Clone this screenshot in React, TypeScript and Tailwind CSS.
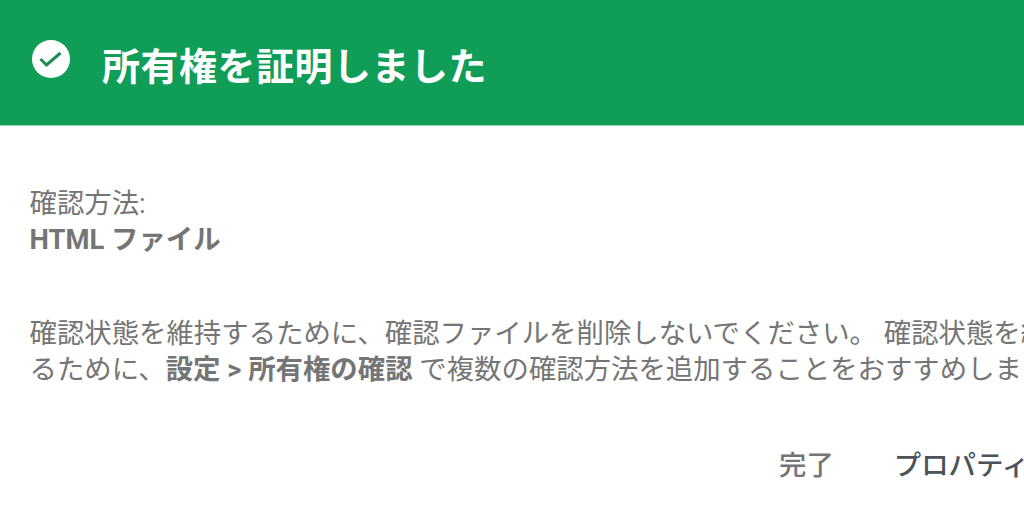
export default function App() {
  return (
    <div className="w-[1024px] h-[512px] overflow-hidden bg-white font-['Roboto','Noto_Sans_CJK_JP',sans-serif]">
      <div className="w-[1200px]">
        <header className="h-[126px] bg-[#0f9d58] flex items-center pl-[31px] border-b border-[#8fd6b4]">
          <svg viewBox="0 0 40 40" className="w-[40px] h-[40px] mb-[8px]">
            <circle cx="20" cy="20" r="19" fill="#fff" />
            <path d="M9.5 20 L15.5 26 L29.5 14" fill="none" stroke="#1d8a56" strokeWidth="3" />
          </svg>
          <h1 className="ml-[31px] mt-[8px] text-[38px] leading-[48px] font-bold text-white tracking-[0.5px]">所有権を証明しました</h1>
        </header>
        <main className="pl-[29.5px] pt-[60px] text-[27.4px] leading-[36px] text-[#757575]">
          <p>確認方法:</p>
          <p className="font-bold">HTML ファイル</p>
          <p className="mt-[58px] w-[1100px]">
            確認状態を維持するために、確認ファイルを削除しないでください。 確認状態を維持す<br />
            るために、<b>設定 &gt; 所有権の確認</b> で複数の確認方法を追加することをおすすめします。
          </p>
          <div className="mt-[60px] pl-[749.5px] flex gap-[60px] font-medium">
            <span className="text-[#757575]">完了</span>
            <span className="text-[#4b5358]">プロパティに移動</span>
          </div>
        </main>
      </div>
    </div>
  );
}
